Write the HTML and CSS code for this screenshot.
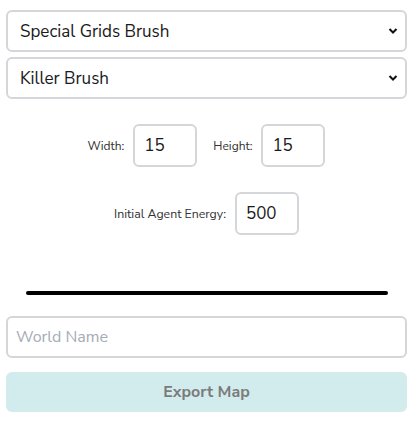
FILE: index.html
```html
<!DOCTYPE html>
<html>
<head>
<meta charset="utf-8">
<link rel="stylesheet" href="styles.css">
</head>
<body>
<div class="panel">
  <select class="field select">
    <option>Special Grids Brush</option>
  </select>
  <select class="field select select-second">
    <option>Killer Brush</option>
  </select>
  <div class="row row-size">
    <label class="lbl">Width:</label>
    <input class="num" type="text" value="15">
    <label class="lbl lbl-height">Height:</label>
    <input class="num" type="text" value="15">
  </div>
  <div class="row row-energy">
    <label class="lbl">Initial Agent Energy:</label>
    <input class="num" type="text" value="500">
  </div>
  <div class="divider"></div>
  <input class="field text" type="text" placeholder="World Name">
  <button class="export">Export Map</button>
</div>
</body>
</html>
```
FILE: styles.css
```css
html, body {
  margin: 0;
  padding: 0;
  background: #ffffff;
}
body {
  font-family: "Nunito Sans", Lato, "Noto Sans", sans-serif;
  color: #212529;
}
.panel {
  display: flex;
  flex-direction: column;
  width: 401px;
  padding: 10px 0 0 6px;
}
.field {
  box-sizing: border-box;
  width: 401px;
  height: 42px;
  border: 2px solid #d4d6da;
  border-radius: 6px;
  background: #fff;
  font-family: inherit;
  font-size: 17px;
  color: #1a1a1a;
  padding: 0 12px;
  outline: none;
}
.select {
  appearance: none;
  -webkit-appearance: none;
  background-image: url("data:image/svg+xml;utf8,<svg xmlns='http://www.w3.org/2000/svg' width='10' height='8' viewBox='0 0 10 8'><path d='M1.5 2 L5 5.5 L8.5 2' fill='none' stroke='%23111' stroke-width='2'/></svg>");
  background-repeat: no-repeat;
  background-position: right 7px center;
}
.select-second {
  margin-top: 5px;
}
.row {
  display: flex;
  justify-content: center;
  align-items: center;
}
.row-size {
  margin-top: 25px;
}
.row-energy {
  margin-top: 25px;
}
.lbl {
  font-size: 12px;
  color: #333;
  margin-right: 9px;
}
.row-energy .lbl {
  font-size: 12.3px;
  margin-right: 9px;
}
.lbl-height {
  margin-left: 16px;
}
.num {
  box-sizing: border-box;
  width: 64px;
  height: 43px;
  border: 2px solid #d4d6da;
  border-radius: 6px;
  font-family: inherit;
  font-size: 17px;
  color: #1a1a1a;
  padding: 0 9px;
  outline: none;
}
.divider {
  margin: 56px 0 0 20px;
  width: 362px;
  height: 4px;
  border-radius: 2px;
  background: #000;
}
.text {
  margin-top: 21px;
  font-size: 16px;
  padding: 0 8px;
}
.text::placeholder {
  color: #a4abb5;
}
.export {
  margin-top: 14px;
  width: 401px;
  height: 40px;
  border: none;
  border-radius: 6px;
  background: #d2ecee;
  color: #7b7b7b;
  font-family: inherit;
  font-weight: 700;
  font-size: 16px;
}
```
